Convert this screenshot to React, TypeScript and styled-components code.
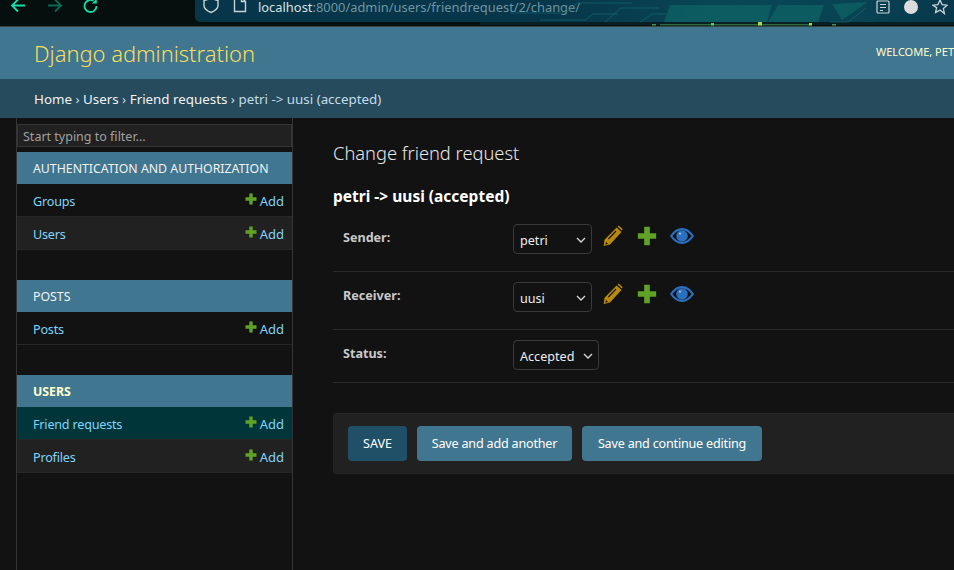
import { createGlobalStyle, styled } from "styled-components";

const GlobalStyle = createGlobalStyle`
  html, body {
    margin: 0;
    height: 100%;
    overflow: hidden;
    background: #121212;
  }
  body {
    font-family: "Noto Sans", "Open Sans", "Liberation Sans", sans-serif;
    font-size: 13px;
    color: #eeeeee;
  }
`;

const primary = "#417690";
const secondary = "#264b5d";
const linkColour = "#81d4fa";
const border = "#353535";

const Page = styled.div`
  width: 954px;
  height: 570px;
  overflow: hidden;
  display: flex;
  flex-direction: column;
`;

const BrowserBar = styled.div`
  height: 26px;
  flex: none;
  display: flex;
  position: relative;
  background: #050f0e;
  border-bottom: 1px solid #3a4442;
`;

const NavButtons = styled.div`
  width: 195px;
  flex: none;
  display: flex;
  align-items: flex-start;
  gap: 19px;
  padding: 0 0 0 10px;
  box-sizing: border-box;
`;

const NavIcon = styled.svg`
  width: 17px;
  height: 17px;
  margin-top: -3px;
  fill: none;
  stroke-width: 1.8;
  flex: none;
`;

const UrlBar = styled.div`
  flex: 1;
  height: 22px;
  display: flex;
  align-items: flex-start;
  position: relative;
  background: #07354a;
  border-bottom-left-radius: 5px;
  padding-left: 8px;
`;

const UrlIcon = styled.svg`
  width: 16px;
  height: 17px;
  margin-top: -3px;
  fill: none;
  stroke: #c9d3d4;
  stroke-width: 1.4;
  flex: none;
`;

const UrlText = styled.div`
  margin-left: 10px;
  font-size: 12.9px;
  line-height: 15px;
  white-space: nowrap;
  color: #6f959f;
  b {
    font-weight: 400;
    color: #d7e0e1;
  }
`;

const Circuit = styled.svg`
  position: absolute;
  z-index: 1;
  left: 480px;
  top: 0;
  width: 474px;
  height: 26px;
`;

const UrlActions = styled.div`
  position: absolute;
  z-index: 2;
  right: 6px;
  top: -1px;
  display: flex;
  align-items: center;
  gap: 14px;
`;

const Header = styled.header`
  height: 52px;
  flex: none;
  display: flex;
  align-items: center;
  justify-content: space-between;
  background: ${primary};
  padding: 0 0 0 34px;
`;

const Branding = styled.h1`
  margin: 0;
  font-size: 21.9px;
  font-weight: 300;
  color: #f5dd5d;
  white-space: nowrap;
`;

const UserTools = styled.div`
  width: 78px;
  flex: none;
  height: 16px;
  line-height: 16px;
  margin-bottom: 3px;
  overflow: hidden;
  font-size: 11px;
  white-space: nowrap;
  color: #ffffcc;
  text-transform: uppercase;
`;

const Breadcrumbs = styled.nav`
  height: 39px;
  flex: none;
  display: flex;
  align-items: center;
  padding-left: 34px;
  background: ${secondary};
  color: #c4dce8;
  font-size: 13.35px;
  white-space: nowrap;
  span {
    color: #f2f2f2;
  }
`;

const Body = styled.div`
  flex: 1;
  display: flex;
  min-height: 0;
`;

const Sidebar = styled.aside`
  width: 277px;
  margin-left: 16px;
  flex: none;
  box-sizing: border-box;
  border-left: 1px solid ${border};
  border-right: 1px solid ${border};
  padding-top: 6px;
`;

const FilterInput = styled.div`
  height: 23px;
  box-sizing: border-box;
  display: flex;
  align-items: center;
  margin-bottom: 5px;
  padding: 1px 0 0 5px;
  background: #212121;
  border: 1px solid ${border};
  color: #a0a0a0;
  font-size: 12.5px;
  white-space: nowrap;
`;

const AppModule = styled.section`
  margin-bottom: 30px;
`;

const ModuleTitle = styled.div<{ $current?: boolean }>`
  height: 32px;
  display: flex;
  align-items: center;
  padding-left: 16px;
  background: ${primary};
  font-size: 12.3px;
  font-weight: ${(p) => (p.$current ? 700 : 400)};
  color: ${(p) => (p.$current ? "#ffffcc" : "#f2f2f2")};
  white-space: nowrap;
`;

const ModelRow = styled.div<{ $alt?: boolean; $current?: boolean }>`
  height: 33px;
  box-sizing: border-box;
  display: flex;
  align-items: center;
  justify-content: space-between;
  padding: 2px 8px 0 16px;
  border-bottom: 1px solid #262626;
  background: ${(p) => (p.$current ? "#00363a" : p.$alt ? "#212121" : "#121212")};
  color: ${linkColour};
  font-size: 12.6px;
  letter-spacing: -0.2px;
`;

const AddLink = styled.span`
  display: flex;
  align-items: center;
  gap: 3px;
  font-size: 13px;
  letter-spacing: 0;
  svg {
    margin-top: -4px;
  }
`;

const Main = styled.main`
  flex: 1;
  min-width: 0;
  padding: 21px 0 0 40px;
`;

const PageTitle = styled.h2`
  margin: 0 0 19px;
  font-size: 18.3px;
  line-height: 28px;
  font-weight: 300;
  color: #e6e6e6;
`;

const ObjectTitle = styled.h3`
  margin: 0 0 8px;
  font-size: 15.5px;
  line-height: 20px;
  font-weight: 700;
  color: #ffffff;
  white-space: nowrap;
`;

const FormRow = styled.div<{ $height: number }>`
  height: ${(p) => p.$height}px;
  box-sizing: border-box;
  display: flex;
  align-items: flex-start;
  padding: 10px 0 0 10px;
  border-bottom: 1px solid #2a2a2a;
`;

const FieldLabel = styled.label`
  width: 170px;
  flex: none;
  padding-top: 5px;
  font-size: 12.6px;
  line-height: 18px;
  font-weight: 700;
  color: #c9c9c9;
`;

const SelectBox = styled.div<{ $width: number }>`
  width: ${(p) => p.$width}px;
  height: 30px;
  box-sizing: border-box;
  display: flex;
  align-items: center;
  justify-content: space-between;
  padding: 3px 5px 0 6px;
  background: #121212;
  border: 1px solid #3a3a3a;
  border-radius: 4px;
  color: #eeeeee;
  font-size: 12.6px;
  flex: none;
  svg {
    margin-top: -2px;
  }
`;

const RelatedLinks = styled.div`
  display: flex;
  align-items: center;
  height: 24px;
  margin-left: 10px;
  gap: 13px;
`;

const SubmitRow = styled.div`
  height: 61px;
  box-sizing: border-box;
  margin-top: 30px;
  display: flex;
  align-items: center;
  gap: 10px;
  padding-left: 14px;
  background: #212121;
  border: 1px solid #262626;
  border-right: none;
  border-radius: 4px 0 0 4px;
`;

const SubmitButton = styled.button<{ $default?: boolean; $width: number }>`
  width: ${(p) => p.$width}px;
  height: 35px;
  padding: 0;
  border: none;
  border-radius: 4px;
  font-family: inherit;
  font-size: 12.6px;
  letter-spacing: ${(p) => (p.$default ? "0" : "-0.2px")};
  color: #ffffff;
  white-space: nowrap;
  background: ${(p) => (p.$default ? "#205067" : primary)};
  text-transform: ${(p) => (p.$default ? "uppercase" : "none")};
`;

const Chevron = () => (
  <svg width="10" height="6" viewBox="0 0 10 6" fill="none" stroke="#d8d8d8" strokeWidth="1.3">
    <path d="M1 1l4 4 4-4" />
  </svg>
);

const PlusIcon = ({ size = 12 }: { size?: number }) => (
  <svg width={size} height={size} viewBox="0 0 12 12">
    <path fill="#5fa225" d="M4.300 0.500h3.400v3.800h3.800v3.400h-3.800v3.800h-3.400v-3.800h-3.800v-3.400h3.800z" />
  </svg>
);

const PencilIcon = () => (
  <svg width="22" height="22" viewBox="0 0 22 22">
    <path fill="#b88a0b" d="M15.600 1.500l1.200-.9 3.900 3.600-1 1.200zM14.600 2.600l4.900 4.400L8 19.500 1.700 21 2.500 14.700z" />
    <path fill="#121212" d="M13.600 5.600l.8.8-7.600 8-.8-.8zM4 17l2 1.900-2.600.7z" />
  </svg>
);

const EyeIcon = () => (
  <svg width="24" height="16" viewBox="0 0 24 16">
    <path fill="none" stroke="#2b70bf" strokeWidth="2.200" d="M1.200 8c3-4.400 7-6.900 10.800-6.900S19.800 3.600 22.800 8c-3 4.400-7 6.900-10.800 6.900S4.200 12.400 1.200 8z" />
    <circle cx="12" cy="8" r="5.800" fill="#2b70bf" />
    <circle cx="10" cy="5.600" r="1.200" fill="#8db8e8" />
  </svg>
);

const FieldLinks = () => (
  <RelatedLinks>
    <PencilIcon />
    <PlusIcon size={20} />
    <EyeIcon />
  </RelatedLinks>
);

const modules = [
  { title: "AUTHENTICATION AND AUTHORIZATION", models: ["Groups", "Users"] },
  { title: "POSTS", models: ["Posts"] },
  { title: "USERS", models: ["Friend requests", "Profiles"], current: "Friend requests" },
];

export default function App() {
  return (
    <>
      <GlobalStyle />
      <Page>
        <BrowserBar>
          <NavButtons>
            <NavIcon viewBox="0 0 17 17" stroke="#12e0a8">
              <path d="M15 8.500H2M8 2.500l-6 6 6 6" />
            </NavIcon>
            <NavIcon viewBox="0 0 17 17" stroke="#0b6a52">
              <path d="M2 8.500h13M9 2.500l6 6-6 6" />
            </NavIcon>
            <NavIcon viewBox="0 0 17 17" stroke="#12e0a8">
              <path d="M14.500 9a6 6 0 1 1-3-5.200" />
              <path d="M14.800 1.500v5h-5z" fill="#12e0a8" stroke="none" />
            </NavIcon>
          </NavButtons>
          <UrlBar>
            <UrlIcon viewBox="0 0 16 17">
              <path d="M8 1.500l7 2v5c0 3.500-3.500 5.500-7 7-3.500-1.500-7-3.500-7-7v-5z" />
            </UrlIcon>
            <UrlIcon viewBox="0 0 16 17" style={{ marginLeft: 13 }}>
              <path d="M2.500 .5h7l4 4v10h-11zM9.500 .5v4h4" />
            </UrlIcon>
            <UrlText>
              <b>localhost</b>:8000/admin/users/friendrequest/2/change/
            </UrlText>
            <UrlActions>
              <svg width="14" height="15" viewBox="0 0 14 15" fill="none" stroke="#c9d3d4" strokeWidth="1.200">
                <path d="M2 1h10a1 1 0 0 1 1 1v10a1 1 0 0 1-1 1H2a1 1 0 0 1-1-1V2a1 1 0 0 1 1-1zM4 4.500h6M4 7.500h6M4 10.500h3" />
              </svg>
              <svg width="14" height="14" viewBox="0 0 14 14">
                <circle cx="7" cy="7" r="7" fill="#dcdcdc" />
              </svg>
              <svg width="16" height="16" viewBox="0 0 16 16" fill="none" stroke="#c9d3d4" strokeWidth="1.300">
                <path d="M8 1l2.100 4.600 5 .6-3.700 3.400 1 5L8 11.100l-4.400 2.500 1-5L.9 6.200l5-.6z" />
              </svg>
            </UrlActions>
          </UrlBar>
          <Circuit viewBox="0 0 474 26">
            <defs>
              <linearGradient id="barGlow" x1="0" x2="1" y1="0" y2="0">
                <stop offset="0" stopColor="#0a5561" stopOpacity="0" />
                <stop offset="0.45" stopColor="#0a5561" stopOpacity="0.55" />
                <stop offset="0.8" stopColor="#0a5561" stopOpacity="0.4" />
                <stop offset="1" stopColor="#0a4050" stopOpacity="0.25" />
              </linearGradient>
            </defs>
            <path d="M60 0h414v22H60z" fill="url(#barGlow)" />
            <path d="M0 22h474v3H0z" fill="#0a1f22" />
            <g fill="#0e6f6b" opacity="0.55">
              <path d="M190 5h58l-5 17h-59zM240 5h52l-5 17h-52zM298 5h46l-6 17h-50z" />
              <path d="M352 4l36-2-26 18z" />
            </g>
            <g fill="none" stroke="#1c7a78" strokeWidth="1" opacity="0.5">
              <path d="M125 22l16-14h38M160 22l12-8h14M30 13h55l12-10h55M60 20h45l8-6h25" />
              <path d="M350 22l18 0 18-14" />
            </g>
            <g fill="#57c66e">
              <path d="M180 24h150v1.500H180z" opacity="0.45" />
              <rect x="231" y="23" width="3" height="2.500" />
              <rect x="278" y="22" width="4" height="3.500" fill="#a8d84e" />
              <rect x="329" y="23" width="3" height="2.500" fill="#a8d84e" />
              <rect x="172" y="24" width="4" height="1.500" opacity="0.7" />
              <rect x="352" y="24" width="4" height="1.500" opacity="0.7" />
            </g>
          </Circuit>
        </BrowserBar>
        <Header>
          <Branding>Django administration</Branding>
          <UserTools>Welcome, Petri</UserTools>
        </Header>
        <Breadcrumbs>
          <span>Home</span>&nbsp;›&nbsp;<span>Users</span>&nbsp;›&nbsp;<span>Friend requests</span>&nbsp;›&nbsp;petri -&gt; uusi (accepted)
        </Breadcrumbs>
        <Body>
          <Sidebar>
            <FilterInput>Start typing to filter...</FilterInput>
            {modules.map((m) => (
              <AppModule key={m.title}>
                <ModuleTitle $current={!!m.current}>{m.title}</ModuleTitle>
                {m.models.map((name, i) => (
                  <ModelRow key={name} $alt={i % 2 === 1} $current={name === m.current}>
                    {name}
                    <AddLink>
                      <PlusIcon />
                      Add
                    </AddLink>
                  </ModelRow>
                ))}
              </AppModule>
            ))}
          </Sidebar>
          <Main>
            <PageTitle>Change friend request</PageTitle>
            <ObjectTitle>petri -&gt; uusi (accepted)</ObjectTitle>
            <FormRow $height={58}>
              <FieldLabel>Sender:</FieldLabel>
              <SelectBox $width={79}>
                petri
                <Chevron />
              </SelectBox>
              <FieldLinks />
            </FormRow>
            <FormRow $height={58}>
              <FieldLabel>Receiver:</FieldLabel>
              <SelectBox $width={79}>
                uusi
                <Chevron />
              </SelectBox>
              <FieldLinks />
            </FormRow>
            <FormRow $height={53}>
              <FieldLabel>Status:</FieldLabel>
              <SelectBox $width={86}>
                Accepted
                <Chevron />
              </SelectBox>
            </FormRow>
            <SubmitRow>
              <SubmitButton $default $width={59}>Save</SubmitButton>
              <SubmitButton $width={155}>Save and add another</SubmitButton>
              <SubmitButton $width={180}>Save and continue editing</SubmitButton>
            </SubmitRow>
          </Main>
        </Body>
      </Page>
    </>
  );
}
